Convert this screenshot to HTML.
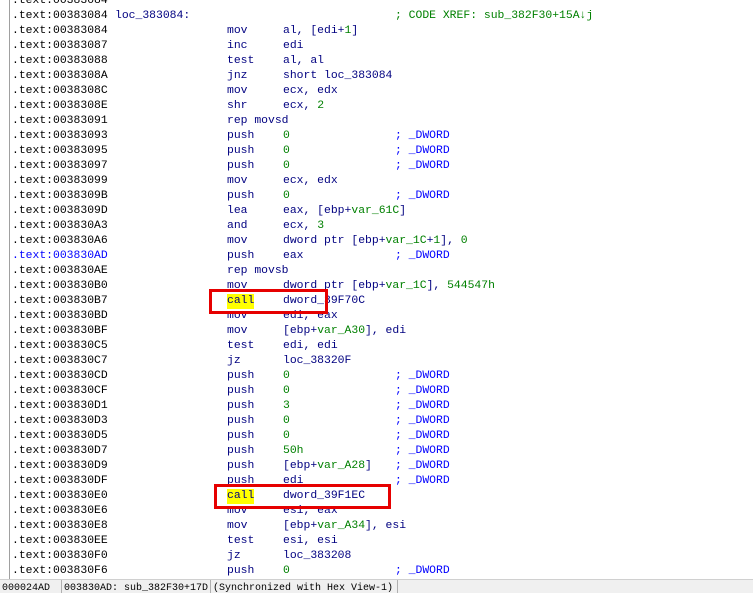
<!DOCTYPE html>
<html><head><meta charset="utf-8"><style>
html,body{margin:0;padding:0;width:753px;height:593px;overflow:hidden;background:#fff;}
body{position:relative;font-family:"Liberation Mono",monospace;font-size:11.4px;}
.l{position:absolute;left:0;height:15px;line-height:15px;width:753px;white-space:pre;}
.l > span{position:absolute;top:0;}
.a{left:12px;color:#000;}
.m{left:227px;color:#000080;}
.o{left:283px;color:#000080;}
.c{left:395px;color:#0000ff;}
.g{color:#008000;}
.n{color:#008000;}
.lbl{left:115px;color:#000080;}
.hl{background:#ffff00;}
#vline{position:absolute;left:9px;top:0;width:1px;height:580px;background:#a0a0a0;}
.box{position:absolute;border:3px solid #e60000;box-sizing:border-box;}
#status{position:absolute;left:0;top:579px;width:753px;height:14px;background:#f0f0f0;border-top:1px solid #d0d0d0;font-family:"Liberation Mono",monospace;font-size:10px;line-height:18px;white-space:pre;color:#000;overflow:hidden;}
#status span{position:absolute;top:0;border-right:1px solid #b0b0b0;padding:0 0 0 2px;height:15px;}
</style></head><body>
<div id="vline"></div>
<div class="l" style="top:-6px"><span class="a">.text:00383084</span></div>
<div class="l" style="top:9px"><span class="a">.text:00383084</span><span class="lbl">loc_383084:</span><span class="c" style="color:#008000">; CODE XREF: sub_382F30+15A↓j</span></div>
<div class="l" style="top:24px"><span class="a">.text:00383084</span><span class="m">mov</span><span class="o">al, [edi+<span class="n">1</span>]</span></div>
<div class="l" style="top:39px"><span class="a">.text:00383087</span><span class="m">inc</span><span class="o">edi</span></div>
<div class="l" style="top:54px"><span class="a">.text:00383088</span><span class="m">test</span><span class="o">al, al</span></div>
<div class="l" style="top:69px"><span class="a">.text:0038308A</span><span class="m">jnz</span><span class="o">short loc_383084</span></div>
<div class="l" style="top:84px"><span class="a">.text:0038308C</span><span class="m">mov</span><span class="o">ecx, edx</span></div>
<div class="l" style="top:99px"><span class="a">.text:0038308E</span><span class="m">shr</span><span class="o">ecx, <span class="n">2</span></span></div>
<div class="l" style="top:114px"><span class="a">.text:00383091</span><span class="m">rep movsd</span></div>
<div class="l" style="top:129px"><span class="a">.text:00383093</span><span class="m">push</span><span class="o n">0</span><span class="c">; _DWORD</span></div>
<div class="l" style="top:144px"><span class="a">.text:00383095</span><span class="m">push</span><span class="o n">0</span><span class="c">; _DWORD</span></div>
<div class="l" style="top:159px"><span class="a">.text:00383097</span><span class="m">push</span><span class="o n">0</span><span class="c">; _DWORD</span></div>
<div class="l" style="top:174px"><span class="a">.text:00383099</span><span class="m">mov</span><span class="o">ecx, edx</span></div>
<div class="l" style="top:189px"><span class="a">.text:0038309B</span><span class="m">push</span><span class="o n">0</span><span class="c">; _DWORD</span></div>
<div class="l" style="top:204px"><span class="a">.text:0038309D</span><span class="m">lea</span><span class="o">eax, [ebp+<span class="g">var_61C</span>]</span></div>
<div class="l" style="top:219px"><span class="a">.text:003830A3</span><span class="m">and</span><span class="o">ecx, <span class="n">3</span></span></div>
<div class="l" style="top:234px"><span class="a">.text:003830A6</span><span class="m">mov</span><span class="o">dword ptr [ebp+<span class="g">var_1C</span>+<span class="n">1</span>], <span class="n">0</span></span></div>
<div class="l" style="top:249px"><span class="a" style="color:#0000ff">.text:003830AD</span><span class="m">push</span><span class="o">eax</span><span class="c">; _DWORD</span></div>
<div class="l" style="top:264px"><span class="a">.text:003830AE</span><span class="m">rep movsb</span></div>
<div class="l" style="top:279px"><span class="a">.text:003830B0</span><span class="m">mov</span><span class="o">dword ptr [ebp+<span class="g">var_1C</span>], <span class="n">544547h</span></span></div>
<div class="l" style="top:294px"><span class="a">.text:003830B7</span><span class="m hl">call</span><span class="o">dword_39F70C</span></div>
<div class="l" style="top:309px"><span class="a">.text:003830BD</span><span class="m">mov</span><span class="o">edi, eax</span></div>
<div class="l" style="top:324px"><span class="a">.text:003830BF</span><span class="m">mov</span><span class="o">[ebp+<span class="g">var_A30</span>], edi</span></div>
<div class="l" style="top:339px"><span class="a">.text:003830C5</span><span class="m">test</span><span class="o">edi, edi</span></div>
<div class="l" style="top:354px"><span class="a">.text:003830C7</span><span class="m">jz</span><span class="o">loc_38320F</span></div>
<div class="l" style="top:369px"><span class="a">.text:003830CD</span><span class="m">push</span><span class="o n">0</span><span class="c">; _DWORD</span></div>
<div class="l" style="top:384px"><span class="a">.text:003830CF</span><span class="m">push</span><span class="o n">0</span><span class="c">; _DWORD</span></div>
<div class="l" style="top:399px"><span class="a">.text:003830D1</span><span class="m">push</span><span class="o n">3</span><span class="c">; _DWORD</span></div>
<div class="l" style="top:414px"><span class="a">.text:003830D3</span><span class="m">push</span><span class="o n">0</span><span class="c">; _DWORD</span></div>
<div class="l" style="top:429px"><span class="a">.text:003830D5</span><span class="m">push</span><span class="o n">0</span><span class="c">; _DWORD</span></div>
<div class="l" style="top:444px"><span class="a">.text:003830D7</span><span class="m">push</span><span class="o n">50h</span><span class="c">; _DWORD</span></div>
<div class="l" style="top:459px"><span class="a">.text:003830D9</span><span class="m">push</span><span class="o">[ebp+<span class="g">var_A28</span>]</span><span class="c">; _DWORD</span></div>
<div class="l" style="top:474px"><span class="a">.text:003830DF</span><span class="m">push</span><span class="o">edi</span><span class="c">; _DWORD</span></div>
<div class="l" style="top:489px"><span class="a">.text:003830E0</span><span class="m hl">call</span><span class="o">dword_39F1EC</span></div>
<div class="l" style="top:504px"><span class="a">.text:003830E6</span><span class="m">mov</span><span class="o">esi, eax</span></div>
<div class="l" style="top:519px"><span class="a">.text:003830E8</span><span class="m">mov</span><span class="o">[ebp+<span class="g">var_A34</span>], esi</span></div>
<div class="l" style="top:534px"><span class="a">.text:003830EE</span><span class="m">test</span><span class="o">esi, esi</span></div>
<div class="l" style="top:549px"><span class="a">.text:003830F0</span><span class="m">jz</span><span class="o">loc_383208</span></div>
<div class="l" style="top:564px"><span class="a">.text:003830F6</span><span class="m">push</span><span class="o n">0</span><span class="c">; _DWORD</span></div>
<div class="box" style="left:209px;top:289px;width:119px;height:25px;"></div>
<div class="box" style="left:214px;top:484px;width:177px;height:25px;"></div>
<div id="status"><span style="left:0;width:59px">000024AD</span><span style="left:62px;width:146px">003830AD: sub_382F30+17D</span><span style="left:211px;width:184px">(Synchronized with Hex View-1)</span></div>
</body></html>
